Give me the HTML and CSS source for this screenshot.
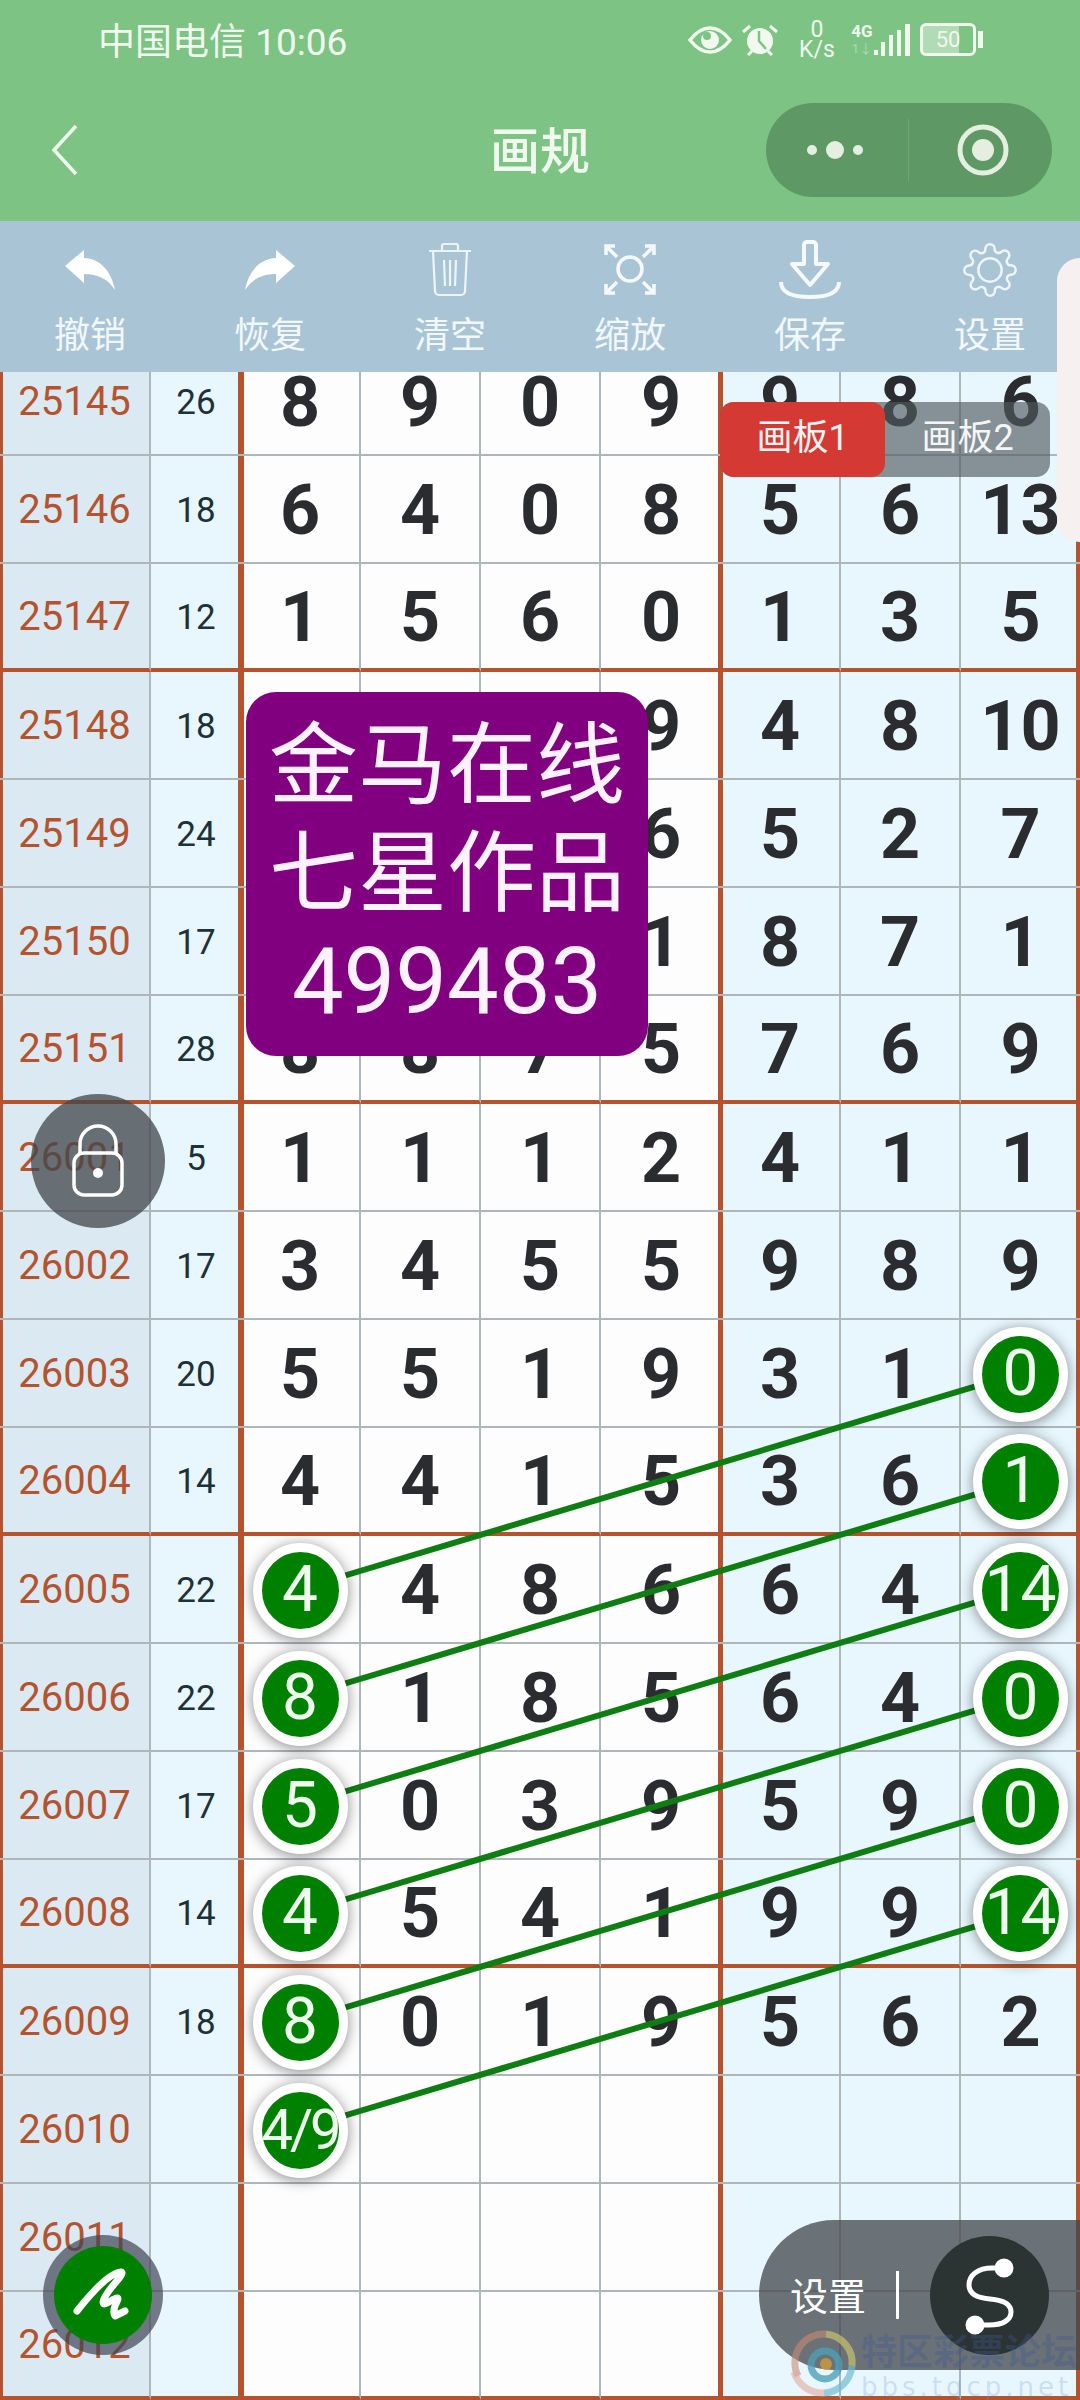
FILE: index.html
```html
<!DOCTYPE html>
<html lang="zh-CN">
<head>
  <meta charset="UTF-8">
  <meta name="viewport" content="width=device-width, initial-scale=1.0">
  <title>画规</title>
  <link rel="stylesheet" href="styles.css">
</head>
<body>
  <div id="wrapper">
    <header id="topbar">
      <div class="status">
        <span class="carrier">中国电信 10:06</span>
        <div class="status-icons">
          <svg class="ic-eye" viewBox="0 0 44 28" width="44" height="28">
            <path d="M2 14C9 5 15 2 22 2s13 3 20 12c-7 9-13 12-20 12S9 23 2 14z" fill="none" stroke="#f1f9ef" stroke-width="3.5"/>
            <circle cx="22" cy="14" r="9" fill="#f1f9ef"/>
            <circle cx="19" cy="10" r="4" fill="#7cc384"/>
          </svg>
          <svg class="ic-alarm" viewBox="0 0 38 32" width="38" height="32">
            <circle cx="19" cy="17" r="13" fill="#f1f9ef"/>
            <path d="M2 8l7-6M36 8l-7-6M7 31l4-4M31 31l-4-4" stroke="#f1f9ef" stroke-width="3" fill="none"/>
            <path d="M18 7v10l7 8" stroke="#7cc384" stroke-width="2.5" fill="none"/>
          </svg>
          <div class="speed"><span>0</span><span>K/s</span></div>
          <div class="net"><span class="net-type">4G</span><span class="net-flow">1↓</span></div>
          <svg class="ic-signal" viewBox="0 0 36 32" width="36" height="32">
            <rect x="0" y="26" width="4" height="5" fill="#f1f9ef"/>
            <rect x="7" y="18" width="4" height="14" fill="#f1f9ef"/>
            <rect x="15" y="11" width="4" height="21" fill="#f1f9ef"/>
            <rect x="23" y="6" width="4" height="26" fill="#f1f9ef"/>
            <rect x="31" y="0" width="5" height="32" fill="#f1f9ef"/>
          </svg>
          <div class="battery"><span>50</span></div>
          <i class="battery-tip"></i>
        </div>
      </div>
      <nav class="navbar">
        <svg class="back" viewBox="0 0 30 54" width="30" height="54"><path d="M26 3L4 27l22 24" fill="none" stroke="#f1f9ef" stroke-width="3.5"/></svg>
        <h1>画规</h1>
        <div class="capsule">
          <svg viewBox="0 0 60 20" width="60" height="20">
            <circle cx="7" cy="10" r="5" fill="#e4efe2"/><circle cx="30" cy="10" r="9" fill="#e4efe2"/><circle cx="53" cy="10" r="5" fill="#e4efe2"/>
          </svg>
          <i class="capsule-line"></i>
          <svg viewBox="0 0 60 60" width="60" height="60">
            <circle cx="30" cy="30" r="23" fill="none" stroke="#e4efe2" stroke-width="5"/><circle cx="30" cy="30" r="11" fill="#e4efe2"/>
          </svg>
        </div>
      </nav>
    </header>

    <div id="toolbar">
      <div class="tool">
        <svg viewBox="0 0 60 60" width="60" height="60"><path id="undo" d="M5 26L24 10v8c16 1 27 12 31 32-7-11-17-16-31-16v9z" fill="#fff"/></svg>
        <span>撤销</span>
      </div>
      <div class="tool">
        <svg viewBox="0 0 60 60" width="60" height="60"><path d="M55 26L36 10v8C20 19 9 30 5 50c7-11 17-16 31-16v9z" fill="#fff"/></svg>
        <span>恢复</span>
      </div>
      <div class="tool">
        <svg viewBox="0 0 60 60" width="60" height="60" fill="none" stroke="#eef5f8" stroke-width="2.2">
          <path d="M9 11h42M22 11V6a2 2 0 012-2h12a2 2 0 012 2v5M13 11l2 40a4 4 0 004 4h22a4 4 0 004-4l2-40M24 20l1 26M30 20v26M36 20l-1 26"/>
        </svg>
        <span>清空</span>
      </div>
      <div class="tool">
        <svg viewBox="0 0 60 60" width="60" height="60" fill="none" stroke="#f5f9fb" stroke-width="3.5">
          <circle cx="30" cy="29" r="12"/>
          <path d="M6 15V6h9M6 6l11 11M54 15V6h-9M54 6L43 17M6 44v9h9M6 53l11-11M54 44v9h-9M54 53L43 42"/>
        </svg>
        <span>缩放</span>
      </div>
      <div class="tool">
        <svg viewBox="0 0 70 60" width="70" height="60" fill="none" stroke="#f5f9fb" stroke-width="4">
          <path d="M29 5a3 3 0 013-3h6a3 3 0 013 3v19h12L35 45 17 24h12z" stroke-linejoin="round"/>
          <path d="M6 42c0 10 10 15 29 15s29-5 29-15"/>
        </svg>
        <span>保存</span>
      </div>
      <div class="tool">
        <svg viewBox="0 0 24 24" width="56" height="56" fill="none" stroke="#eef5f8" stroke-width="1.05">
          <circle cx="12" cy="12" r="5"/>
          <path d="M19.4 15a1.65 1.65 0 0 0 .33 1.82l.06.06a2 2 0 0 1 0 2.83 2 2 0 0 1-2.83 0l-.06-.06a1.65 1.65 0 0 0-1.82-.33 1.65 1.65 0 0 0-1 1.51V21a2 2 0 0 1-2 2 2 2 0 0 1-2-2v-.09A1.65 1.65 0 0 0 9 19.4a1.65 1.65 0 0 0-1.82.33l-.06.06a2 2 0 0 1-2.83 0 2 2 0 0 1 0-2.83l.06-.06a1.65 1.65 0 0 0 .33-1.82 1.65 1.65 0 0 0-1.51-1H3a2 2 0 0 1-2-2 2 2 0 0 1 2-2h.09A1.65 1.65 0 0 0 4.6 9a1.65 1.65 0 0 0-.33-1.82l-.06-.06a2 2 0 0 1 0-2.83 2 2 0 0 1 2.83 0l.06.06a1.65 1.65 0 0 0 1.82.33H9a1.65 1.65 0 0 0 1-1.51V3a2 2 0 0 1 2-2 2 2 0 0 1 2 2v.09a1.65 1.65 0 0 0 1 1.51 1.65 1.65 0 0 0 1.82-.33l.06-.06a2 2 0 0 1 2.83 0 2 2 0 0 1 0 2.83l-.06.06a1.65 1.65 0 0 0-.33 1.82V9a1.65 1.65 0 0 0 1.51 1H21a2 2 0 0 1 2 2 2 2 0 0 1-2 2h-.09a1.65 1.65 0 0 0-1.51 1z"/>
        </svg>
        <span>设置</span>
      </div>
    </div>

    <div id="board">
      <table class="sheet">
        <tr><th>25145</th><td>26</td><td>8</td><td>9</td><td>0</td><td>9</td><td>9</td><td>8</td><td>6</td></tr>
        <tr><th>25146</th><td>18</td><td>6</td><td>4</td><td>0</td><td>8</td><td>5</td><td>6</td><td>13</td></tr>
        <tr class="end"><th>25147</th><td>12</td><td>1</td><td>5</td><td>6</td><td>0</td><td>1</td><td>3</td><td>5</td></tr>
        <tr><th>25148</th><td>18</td><td></td><td></td><td></td><td>9</td><td>4</td><td>8</td><td>10</td></tr>
        <tr><th>25149</th><td>24</td><td></td><td></td><td></td><td>6</td><td>5</td><td>2</td><td>7</td></tr>
        <tr><th>25150</th><td>17</td><td></td><td></td><td></td><td>1</td><td>8</td><td>7</td><td>1</td></tr>
        <tr class="end"><th>25151</th><td>28</td><td>8</td><td>8</td><td>7</td><td>5</td><td>7</td><td>6</td><td>9</td></tr>
        <tr><th>26001</th><td>5</td><td>1</td><td>1</td><td>1</td><td>2</td><td>4</td><td>1</td><td>1</td></tr>
        <tr><th>26002</th><td>17</td><td>3</td><td>4</td><td>5</td><td>5</td><td>9</td><td>8</td><td>9</td></tr>
        <tr><th>26003</th><td>20</td><td>5</td><td>5</td><td>1</td><td>9</td><td>3</td><td>1</td><td><span class="ball">0</span></td></tr>
        <tr class="end"><th>26004</th><td>14</td><td>4</td><td>4</td><td>1</td><td>5</td><td>3</td><td>6</td><td><span class="ball">1</span></td></tr>
        <tr><th>26005</th><td>22</td><td><span class="ball">4</span></td><td>4</td><td>8</td><td>6</td><td>6</td><td>4</td><td><span class="ball">14</span></td></tr>
        <tr><th>26006</th><td>22</td><td><span class="ball">8</span></td><td>1</td><td>8</td><td>5</td><td>6</td><td>4</td><td><span class="ball">0</span></td></tr>
        <tr><th>26007</th><td>17</td><td><span class="ball">5</span></td><td>0</td><td>3</td><td>9</td><td>5</td><td>9</td><td><span class="ball">0</span></td></tr>
        <tr class="end"><th>26008</th><td>14</td><td><span class="ball">4</span></td><td>5</td><td>4</td><td>1</td><td>9</td><td>9</td><td><span class="ball">14</span></td></tr>
        <tr><th>26009</th><td>18</td><td><span class="ball">8</span></td><td>0</td><td>1</td><td>9</td><td>5</td><td>6</td><td>2</td></tr>
        <tr><th>26010</th><td></td><td><span class="ball ball-small">4/9</span></td><td></td><td></td><td></td><td></td><td></td><td></td></tr>
        <tr><th>26011</th><td></td><td></td><td></td><td></td><td></td><td></td><td></td><td></td></tr>
        <tr class="end"><th>26012</th><td></td><td></td><td></td><td></td><td></td><td></td><td></td><td></td></tr>
      </table>

      <!-- lines between the balls, in page coordinates -->
      <svg class="lines" viewBox="0 372 1080 2028" width="1080" height="2028">
        <path d="M300 1589L1020 1373M300 1697L1020 1481M300 1805L1020 1589M300 1913L1020 1697M300 2021L1020 1805M300 2129L1020 1913"/>
      </svg>
    </div>

    <div class="side-panel"></div>

    <div class="tabs">
      <span class="tab tab-on">画板1</span>
      <span class="tab">画板2</span>
    </div>

    <div class="notice">
      <p>金马在线</p>
      <p>七星作品</p>
      <p class="notice-code">499483</p>
    </div>

    <div class="lock">
      <svg viewBox="0 0 134 134" width="134" height="134" fill="none" stroke="#fff" stroke-width="3.5">
        <rect x="43" y="59" width="48" height="42" rx="10"/>
        <path d="M49 60V50a18 18 0 0136 0v10"/>
        <circle cx="67" cy="79" r="5" fill="#fff" stroke="none"/>
      </svg>
    </div>

    <div class="pen">
      <div class="pen-inner">
        <svg viewBox="0 0 98 98" width="98" height="98" fill="none" stroke="#fff" stroke-width="7" stroke-linecap="round" stroke-linejoin="round">
          <path d="M23 65C38 46 56 27 67 26c6 1-17 20-18 30 0 6 10-4 14-4 4 1-7 10-2 18l10-5"/>
        </svg>
      </div>
    </div>

    <div class="setting-pill">
      <span class="pill-text">设置</span>
      <i class="pill-line"></i>
      <div class="pill-circle">
        <svg viewBox="0 0 119 119" width="119" height="119" fill="none" stroke="#fff" stroke-width="5">
          <path d="M74 32H62C48 32 39 39 39 49c0 9 8 13 21 14 13 1 21 5 21 13 0 8-8 13-22 13H45"/>
          <circle cx="74" cy="32" r="7" fill="#fff"/>
          <circle cx="45" cy="89" r="7" fill="#fff"/>
        </svg>
      </div>
    </div>

    <div class="watermark">
      <svg viewBox="0 0 70 70" width="70" height="70" fill="none" stroke-width="7">
        <path d="M10 48A29 29 0 0138 6" stroke="#c98a72" opacity=".6"/>
        <path d="M38 6A29 29 0 0164 38" stroke="#c9c26e" opacity=".7"/>
        <path d="M64 38A30 30 0 0136 65" stroke="#6fbcd0" opacity=".7"/>
        <path d="M36 65A30 30 0 016 44" stroke="#e3a9a0" opacity=".6"/>
        <circle cx="37" cy="37" r="14" stroke="#4e9fb5" opacity=".8"/>
        <circle cx="38" cy="36" r="6" fill="#d39a3a" stroke="none" opacity=".8"/>
      </svg>
      <div class="watermark-text">
        <span class="wm-name">特区彩票论坛</span>
        <span class="wm-url">bbs.tqcp.net</span>
      </div>
    </div>
  </div>
</body>
</html>
```

FILE: styles.css
```css
html,body {
  margin: 0;
  padding: 0;
  overflow: hidden;
}
#wrapper {
  position: relative;
  width: 1080px;
  height: 2400px;
  overflow: hidden;
  font-family: "Roboto", "Noto Sans CJK SC", sans-serif;
}

/* status bar + nav */
#topbar {
  height: 221px;
  background-color: #7cc384;
  color: #f1f9ef;
}
.status {
  height: 79px;
  padding: 0 97px 0 98px;
  display: flex;
  align-items: center;
  justify-content: space-between;
}
.carrier {
  font-size: 37px;
  line-height: 1;
  margin-top: 5px;
}
.status-icons {
  display: flex;
  align-items: center;
}
.ic-alarm {
  margin-left: 9px;
}
.speed {
  margin-left: 20px;
  width: 36px;
  display: flex;
  flex-direction: column;
  align-items: center;
  font-size: 23px;
  line-height: 20px;
}
.net {
  margin-left: 17px;
  width: 20px;
  display: flex;
  flex-direction: column;
  align-items: center;
  font-size: 17px;
  font-weight: 700;
  line-height: 17px;
}
.net-flow {
  opacity: .4;
  font-weight: 400;
  font-size: 13px;
}
.ic-signal {
  margin: 0 10px 0 2px;
}
.battery {
  box-sizing: border-box;
  width: 56px;
  height: 33px;
  border: 3px solid #f1f9ef;
  border-radius: 6px;
  background: linear-gradient(90deg, rgba(255,255,255,.4) 72%, transparent 72%);
  display: flex;
  align-items: center;
  justify-content: center;
  font-size: 22px;
  line-height: 1;
}
.battery-tip {
  width: 5px;
  height: 17px;
  margin-left: 2px;
  background-color: #f1f9ef;
}
.navbar {
  height: 142px;
  padding: 0 28px;
  display: grid;
  grid-template-columns: 1fr auto 1fr;
  align-items: center;
}
.back {
  margin-left: 22px;
}
.navbar h1 {
  margin: 4px 0 0;
  font-size: 50px;
  font-weight: 500;
  line-height: 1;
}
.capsule {
  justify-self: end;
  box-sizing: border-box;
  width: 286px;
  height: 94px;
  padding-left: 39px;
  border-radius: 47px;
  background-color: #5e9965;
  display: flex;
  align-items: center;
}
.capsule-line {
  width: 1px;
  height: 62px;
  margin: 0 44px 0 43px;
  background-color: #6da674;
}

/* tools */
#toolbar {
  height: 151px;
  box-sizing: border-box;
  padding-top: 19px;
  background-color: #a9c5d5;
  display: grid;
  grid-template-columns: repeat(6, 180px);
}
.tool {
  display: flex;
  flex-direction: column;
  align-items: center;
  color: #f2f7fa;
  font-size: 36px;
  line-height: 52px;
}
.tool svg {
  height: 60px;
  margin-bottom: 10px;
}

/* table */
#board {
  position: relative;
  height: 2028px;
  overflow: hidden;
}
.sheet {
  width: 1080px;
  margin-top: -24px;
  table-layout: fixed;
  border-collapse: separate;
  border-spacing: 0;
  font-family: "Roboto", sans-serif;
}
.sheet th,
.sheet td {
  box-sizing: border-box;
  height: 108px;
  padding: 2px 0 0;
  border-right: 2px solid #aeb6ba;
  border-bottom: 2px solid #aeb6ba;
  text-align: center;
  line-height: 1;
}
.sheet tr.end th,
.sheet tr.end td {
  border-bottom: 4px solid #b5532f;
}
.sheet th {
  width: 151px;
  background-color: #dbe9f3;
  box-shadow: inset 3px 0 0 #b5532f;
  color: #b5532f;
  font-size: 40px;
  font-weight: 400;
}
.sheet td {
  width: 120px;
  background-color: #fdfdfd;
  color: #2a2c30;
  font-size: 70px;
  font-weight: 700;
}
.sheet td:nth-child(2) {
  width: 90px;
  border-right: none;
  background-color: #e8f7fe;
  box-shadow: inset -3px 0 0 #b5532f;
  color: #1e3038;
  font-size: 35px;
  font-weight: 400;
}
.sheet td:nth-child(3) {
  box-shadow: inset 3px 0 0 #b5532f;
}
.sheet td:nth-child(6) {
  border-right: none;
  box-shadow: inset -3px 0 0 #b5532f;
}
.sheet td:nth-child(n+7) {
  background-color: #e8f7fe;
}
.sheet td:nth-child(7) {
  box-shadow: inset 2px 0 0 #b5532f;
}
.sheet td:nth-child(9) {
  width: 119px;
  border-right: none;
  box-shadow: inset -4px 0 0 #b5532f;
}
.ball {
  position: relative;
  z-index: 2;
  box-sizing: border-box;
  width: 95px;
  height: 95px;
  margin: 0 auto;
  border: 9px solid #fff;
  border-radius: 50%;
  background-color: #008000;
  box-shadow: 0 2px 14px rgba(0, 0, 0, .45);
  display: flex;
  align-items: center;
  justify-content: center;
  color: #eefbee;
  font-size: 64px;
  font-weight: 400;
  white-space: nowrap;
}
.ball-small {
  font-size: 56px;
  letter-spacing: -3px;
}
.lines {
  position: absolute;
  top: 0;
  left: 0;
  z-index: 1;
}
.lines path {
  fill: none;
  stroke: #0e7d12;
  stroke-width: 6;
}

/* things on top of the table */
.side-panel {
  position: absolute;
  top: 258px;
  right: 0;
  z-index: 5;
  width: 23px;
  height: 284px;
  border-radius: 40px 0 0 40px;
  background-color: #f6f1f0;
}
.tabs {
  position: absolute;
  top: 402px;
  left: 720px;
  z-index: 4;
  width: 330px;
  height: 75px;
  display: flex;
  border-radius: 14px;
  background-color: rgba(80, 90, 95, .65);
}
.tab {
  flex: 1;
  border-radius: 14px;
  color: #f5f5f5;
  font-size: 36px;
  line-height: 73px;
  text-align: center;
}
.tab-on {
  background-color: #d43a33;
}
.notice {
  position: absolute;
  top: 692px;
  left: 246px;
  z-index: 4;
  box-sizing: border-box;
  width: 402px;
  height: 364px;
  padding-top: 20px;
  border-radius: 30px;
  background-color: #800080;
  color: #fdf2fd;
  font-size: 89px;
  text-align: center;
}
.notice p {
  margin: 0;
  height: 108px;
  line-height: 108px;
}
.notice .notice-code {
  font-size: 92px;
}
.lock {
  position: absolute;
  top: 1094px;
  left: 31px;
  z-index: 4;
  width: 134px;
  height: 134px;
  border-radius: 50%;
  background-color: rgba(64, 69, 74, .75);
}
.pen {
  position: absolute;
  top: 2235px;
  left: 43px;
  z-index: 4;
  width: 120px;
  height: 120px;
  border-radius: 50%;
  background-color: rgba(64, 69, 84, .7);
  display: flex;
  align-items: center;
  justify-content: center;
}
.pen-inner {
  width: 98px;
  height: 98px;
  border-radius: 50%;
  background-color: #008000;
}
.setting-pill {
  position: absolute;
  top: 2220px;
  right: 0;
  z-index: 4;
  box-sizing: border-box;
  width: 321px;
  height: 150px;
  padding-left: 31px;
  border-radius: 75px 0 0 75px;
  background-color: rgba(64, 69, 74, .75);
  display: flex;
  align-items: center;
  color: #fff;
  font-size: 38px;
}
.pill-text {
  margin-top: -4px;
}
.pill-line {
  width: 3px;
  height: 48px;
  margin: 0 31px 0 30px;
  background-color: #fff;
}
.pill-circle {
  width: 119px;
  height: 119px;
  border-radius: 50%;
  background-color: #2c3333;
}
.watermark {
  position: absolute;
  top: 2328px;
  left: 788px;
  z-index: 6;
  display: flex;
  gap: 3px;
}
.watermark-text {
  display: flex;
  flex-direction: column;
  padding-top: 2px;
}
.wm-name {
  color: rgba(60, 90, 150, .35);
  font-size: 36px;
  font-weight: 700;
  line-height: 46px;
  white-space: nowrap;
}
.wm-url {
  color: rgba(110, 150, 200, .25);
  font-family: "DejaVu Sans", sans-serif;
  font-size: 26px;
  letter-spacing: 4px;
  line-height: 22px;
  white-space: nowrap;
}
```
